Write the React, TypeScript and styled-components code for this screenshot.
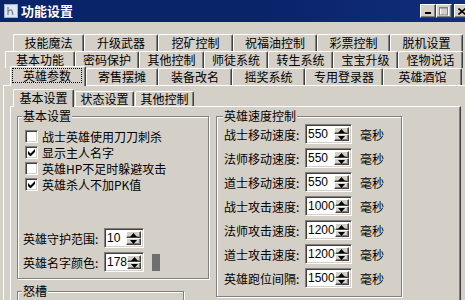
import React from 'react';
import styled, { createGlobalStyle } from 'styled-components';

const FACE = '#d4d0c8';
const SHADOW = '#808080';
const DARK = '#404040';

const GlobalStyle = createGlobalStyle`
  html, body {
    margin: 0;
    padding: 0;
    overflow: hidden;
    background: ${FACE};
  }
  body {
    font-family: "Noto Sans CJK SC", "Liberation Sans", sans-serif;
    font-size: 12px;
    color: #000;
  }
`;

const Window = styled.div`
  width: 465px;
  height: 300px;
  overflow: hidden;
  background: ${FACE};
  display: flex;
  flex-direction: column;
`;

const TitleBar = styled.div`
  flex: none;
  width: 470px;
  height: 22px;
  box-sizing: border-box;
  padding-left: 4px;
  display: flex;
  align-items: center;
  background: linear-gradient(90deg, #0a246a 0%, #0a246a 55%, #112e7c 100%);
  color: #fff;
`;

const Title = styled.span`
  flex: 1;
  margin-left: 3px;
  font-weight: bold;
  font-size: 13px;
  line-height: 22px;
`;

const CaptionButton = styled.div<{ $gap?: number }>`
  width: 16px;
  height: 14px;
  box-sizing: border-box;
  margin-left: ${(p) => p.$gap ?? 0}px;
  background: ${FACE};
  border: 1px solid;
  border-color: #fff ${DARK} ${DARK} #fff;
  box-shadow: inset -1px -1px ${SHADOW};
  display: flex;
  align-items: center;
  justify-content: center;
`;

const Body = styled.div`
  padding: 12px 0 0 3px;
`;

const TabControl = styled.div<{ $w: number }>`
  width: ${(p) => p.$w}px;
  flex: none;
`;

const TabRow = styled.div<{ $h: number; $indent: number }>`
  display: flex;
  height: ${(p) => p.$h}px;
  padding-left: ${(p) => p.$indent}px;
`;

const Tab = styled.div<{ $w: number; $active?: boolean; $small?: boolean; $ml?: number }>`
  position: relative;
  z-index: ${(p) => (p.$active ? 2 : 1)};
  box-sizing: border-box;
  flex: none;
  width: ${(p) => p.$w}px;
  height: ${(p) => (p.$small ? (p.$active ? 18 : 15) : p.$active ? 20 : 17)}px;
  margin-top: ${(p) => (p.$small ? (p.$active ? 0 : 2) : p.$active ? -2 : 0)}px;
  margin-left: ${(p) => p.$ml ?? 0}px;
  background: ${FACE};
  border-top: 1px solid #fff;
  border-left: 1px solid #fff;
  border-right: 1px solid ${DARK};
  border-radius: 2px 2px 0 0;
  box-shadow: inset -1px 0 ${SHADOW};
  display: flex;
  align-items: ${(p) => (p.$active && !p.$small ? 'stretch' : 'center')};
  justify-content: center;
  white-space: nowrap;
  line-height: 14px;
  padding-bottom: ${(p) => (p.$active ? 2 : 0)}px;
`;

const FocusRing = styled.span`
  flex: 1;
  margin: 1px 3px 1px 1px;
  border: 1px dotted #000;
  display: flex;
  align-items: center;
  justify-content: center;
`;

const Panel = styled.div<{ $w?: number; $h: number; $pad: string }>`
  box-sizing: border-box;
  width: ${(p) => (p.$w ? `${p.$w}px` : 'auto')};
  height: ${(p) => p.$h}px;
  padding: ${(p) => p.$pad};
  background: ${FACE};
  border: 1px solid;
  border-color: #fff ${DARK} ${DARK} #fff;
  box-shadow: inset -1px -1px ${SHADOW};
`;

const Columns = styled.div`
  display: grid;
  grid-template-columns: 192px 186px;
  column-gap: 7px;
  align-items: start;
`;

const Stack = styled.div`
  display: flex;
  flex-direction: column;
  gap: 12px;
`;

const Group = styled.div<{ $w: number; $h: number; $pl: number }>`
  box-sizing: border-box;
  width: ${(p) => p.$w}px;
  height: ${(p) => p.$h}px;
  padding-left: ${(p) => p.$pl}px;
  border: 1px solid ${SHADOW};
  box-shadow: inset 1px 1px #fff, 1px 1px #fff;
  display: flex;
  flex-direction: column;
`;

const Legend = styled.span`
  align-self: flex-start;
  margin: -8px 0 0 -1px;
  padding: 0 1px;
  height: 14px;
  line-height: 14px;
  background: ${FACE};
`;

const CheckList = styled.div`
  margin-top: 5px;
  padding-left: 2px;
  display: flex;
  flex-direction: column;
`;

const CheckRow = styled.label`
  height: 16px;
  display: flex;
  align-items: center;
  gap: 4px;
  white-space: nowrap;
`;

const CheckBox = styled.span`
  box-sizing: border-box;
  width: 13px;
  height: 13px;
  flex: none;
  background: #fff;
  border: 1px solid;
  border-color: ${SHADOW} #fff #fff ${SHADOW};
  box-shadow: inset 1px 1px ${DARK}, inset -1px -1px ${FACE};
  display: flex;
  align-items: center;
  justify-content: center;
`;

const FieldList = styled.div<{ $mt: number }>`
  margin-top: ${(p) => p.$mt}px;
  display: flex;
  flex-direction: column;
  gap: 4px;
`;

const FieldRow = styled.div`
  height: 20px;
  display: flex;
  align-items: center;
  white-space: nowrap;
`;

const FieldLabel = styled.span`
  width: 81px;
  flex: none;
`;

const SpinBox = styled.div<{ $w: number }>`
  box-sizing: border-box;
  width: ${(p) => p.$w}px;
  height: 20px;
  flex: none;
  padding: 2px;
  background: #fff;
  border: 1px solid;
  border-color: ${SHADOW} #fff #fff ${SHADOW};
  box-shadow: inset 1px 1px ${DARK}, inset -1px -1px ${FACE};
  display: flex;
  align-items: stretch;
`;

const SpinValue = styled.span`
  flex: 1;
  font-family: "Liberation Sans", Arial, sans-serif;
  font-size: 12px;
  line-height: 14px;
  padding-left: 0;
`;

const SpinButtons = styled.div`
  width: 15px;
  display: flex;
  flex-direction: column;
`;

const SpinButton = styled.div`
  flex: 1;
  box-sizing: border-box;
  background: ${FACE};
  border: 1px solid;
  border-color: #fff ${DARK} ${DARK} #fff;
  box-shadow: inset -1px -1px ${SHADOW};
  display: flex;
  align-items: center;
  justify-content: center;
`;

const Unit = styled.span`
  margin-left: 8px;
`;

const Swatch = styled.span<{ $color: string }>`
  width: 8px;
  height: 17px;
  margin-left: 8px;
  background: ${(p) => p.$color};
`;

const row1: [string, number][] = [
  ['技能魔法', 71],
  ['升级武器', 74],
  ['挖矿控制', 75],
  ['祝福油控制', 84],
  ['彩票控制', 73],
  ['脱机设置', 73],
];

const row2: [string, number][] = [
  ['基本功能', 70],
  ['密码保护', 64],
  ['其他控制', 65],
  ['师徒系统', 64],
  ['转生系统', 65],
  ['宝宝升级', 65],
  ['怪物说话', 65],
];

const row3: [string, number][] = [
  ['英雄参数', 76],
  ['寄售摆摊', 72],
  ['装备改名', 74],
  ['摇奖系统', 73],
  ['专用登录器', 78],
  ['英雄酒馆', 79],
];

const checks = [
  { label: '战士英雄使用刀刀刺杀', on: false },
  { label: '显示主人名字', on: true },
  { label: '英雄HP不足时躲避攻击', on: false },
  { label: '英雄杀人不加PK值', on: true },
];

const speeds: [string, string][] = [
  ['战士移动速度:', '550'],
  ['法师移动速度:', '550'],
  ['道士移动速度:', '550'],
  ['战士攻击速度:', '1000'],
  ['法师攻击速度:', '1200'],
  ['道士攻击速度:', '1200'],
  ['英雄跑位间隔:', '1500'],
];

const Arrow = ({ up }: { up?: boolean }) => (
  <svg width="7" height="4" viewBox="0 0 7 4">
    <path d={up ? 'M3.5 0 L7 4 L0 4 Z' : 'M0 0 L7 0 L3.5 4 Z'} fill="#000" />
  </svg>
);

const Spin = ({ value, width }: { value: string; width: number }) => (
  <SpinBox $w={width}>
    <SpinValue>{value}</SpinValue>
    <SpinButtons>
      <SpinButton>
        <Arrow up />
      </SpinButton>
      <SpinButton>
        <Arrow />
      </SpinButton>
    </SpinButtons>
  </SpinBox>
);

const CheckMark = () => (
  <svg width="7" height="7" viewBox="0 0 7 7">
    <path d="M0 2v3l2 2h1l4-4V0L2.5 4.5Z" fill="#000" />
  </svg>
);

const AppIcon = () => (
  <svg width="14" height="14" viewBox="0 0 14 14">
    <rect x="0.5" y="0.5" width="13" height="13" fill="#dfe6f2" stroke="#9fb0cc" />
    <path d="M4 3v8M4 8c1-2 3-3 4-1l1 4" fill="none" stroke="#6b7a90" strokeWidth="1.2" />
  </svg>
);

export default function App() {
  return (
    <>
      <GlobalStyle />
      <Window>
        <TitleBar>
          <AppIcon />
          <Title>功能设置</Title>
          <CaptionButton>
            <svg width="8" height="8" viewBox="0 0 8 8">
              <rect x="1" y="5" width="6" height="2" fill="#000" />
            </svg>
          </CaptionButton>
          <CaptionButton>
            <svg width="10" height="9" viewBox="0 0 10 9">
              <rect x="1.5" y="0.5" width="8" height="8" fill="none" stroke="#fff" />
              <rect x="0.5" y="0" width="8" height="8" fill="none" stroke={SHADOW} />
              <rect x="0.5" y="0" width="8" height="1.5" fill={SHADOW} />
            </svg>
          </CaptionButton>
          <CaptionButton $gap={2}>
            <svg width="8" height="7" viewBox="0 0 8 7">
              <path d="M0.5 0.5l7 6M7.5 0.5l-7 6" stroke="#000" strokeWidth="1.6" />
            </svg>
          </CaptionButton>
        </TitleBar>

        <Body>
          <TabControl $w={464}>
            <TabRow $h={17} $indent={10}>
              {row1.map(([t, w]) => (
                <Tab key={t} $w={w}>
                  {t}
                </Tab>
              ))}
            </TabRow>
            <TabRow $h={17} $indent={2}>
              {row2.map(([t, w]) => (
                <Tab key={t} $w={w}>
                  {t}
                </Tab>
              ))}
            </TabRow>
            <TabRow $h={17} $indent={7}>
              {row3.map(([t, w], i) =>
                i === 0 ? (
                  <Tab key={t} $w={w} $active>
                    <FocusRing>{t}</FocusRing>
                  </Tab>
                ) : (
                  <Tab key={t} $w={w}>
                    {t}
                  </Tab>
                ),
              )}
            </TabRow>

            <Panel $h={260} $pad="3px 0 0 6px">
              <TabControl $w={451}>
                <TabRow $h={17} $indent={3}>
                  <Tab $w={61} $small $active>
                    基本设置
                  </Tab>
                  <Tab $w={59} $small $ml={1}>
                    状态设置
                  </Tab>
                  <Tab $w={59} $small $ml={1}>
                    其他控制
                  </Tab>
                </TabRow>
                <Panel $w={451} $h={240} $pad="9px 0 0 6px">
                  <Columns>
                    <Stack>
                      <Group $w={192} $h={163} $pl={5}>
                        <Legend>基本设置</Legend>
                        <CheckList>
                          {checks.map((c) => (
                            <CheckRow key={c.label}>
                              <CheckBox>{c.on && <CheckMark />}</CheckBox>
                              {c.label}
                            </CheckRow>
                          ))}
                        </CheckList>
                        <FieldList $mt={36}>
                          <FieldRow>
                            <FieldLabel>英雄守护范围:</FieldLabel>
                            <Spin value="10" width={40} />
                          </FieldRow>
                          <FieldRow>
                            <FieldLabel>英雄名字颜色:</FieldLabel>
                            <Spin value="178" width={40} />
                            <Swatch $color="#6f6f6f" />
                          </FieldRow>
                        </FieldList>
                      </Group>
                      <Group $w={167} $h={60} $pl={5}>
                        <Legend>怒槽</Legend>
                      </Group>
                    </Stack>

                    <Group $w={186} $h={181} $pl={7}>
                      <Legend>英雄速度控制</Legend>
                      <FieldList $mt={1}>
                        {speeds.map(([label, value]) => (
                          <FieldRow key={label}>
                            <FieldLabel>{label}</FieldLabel>
                            <Spin value={value} width={47} />
                            <Unit>毫秒</Unit>
                          </FieldRow>
                        ))}
                      </FieldList>
                    </Group>
                  </Columns>
                </Panel>
              </TabControl>
            </Panel>
          </TabControl>
        </Body>
      </Window>
    </>
  );
}
